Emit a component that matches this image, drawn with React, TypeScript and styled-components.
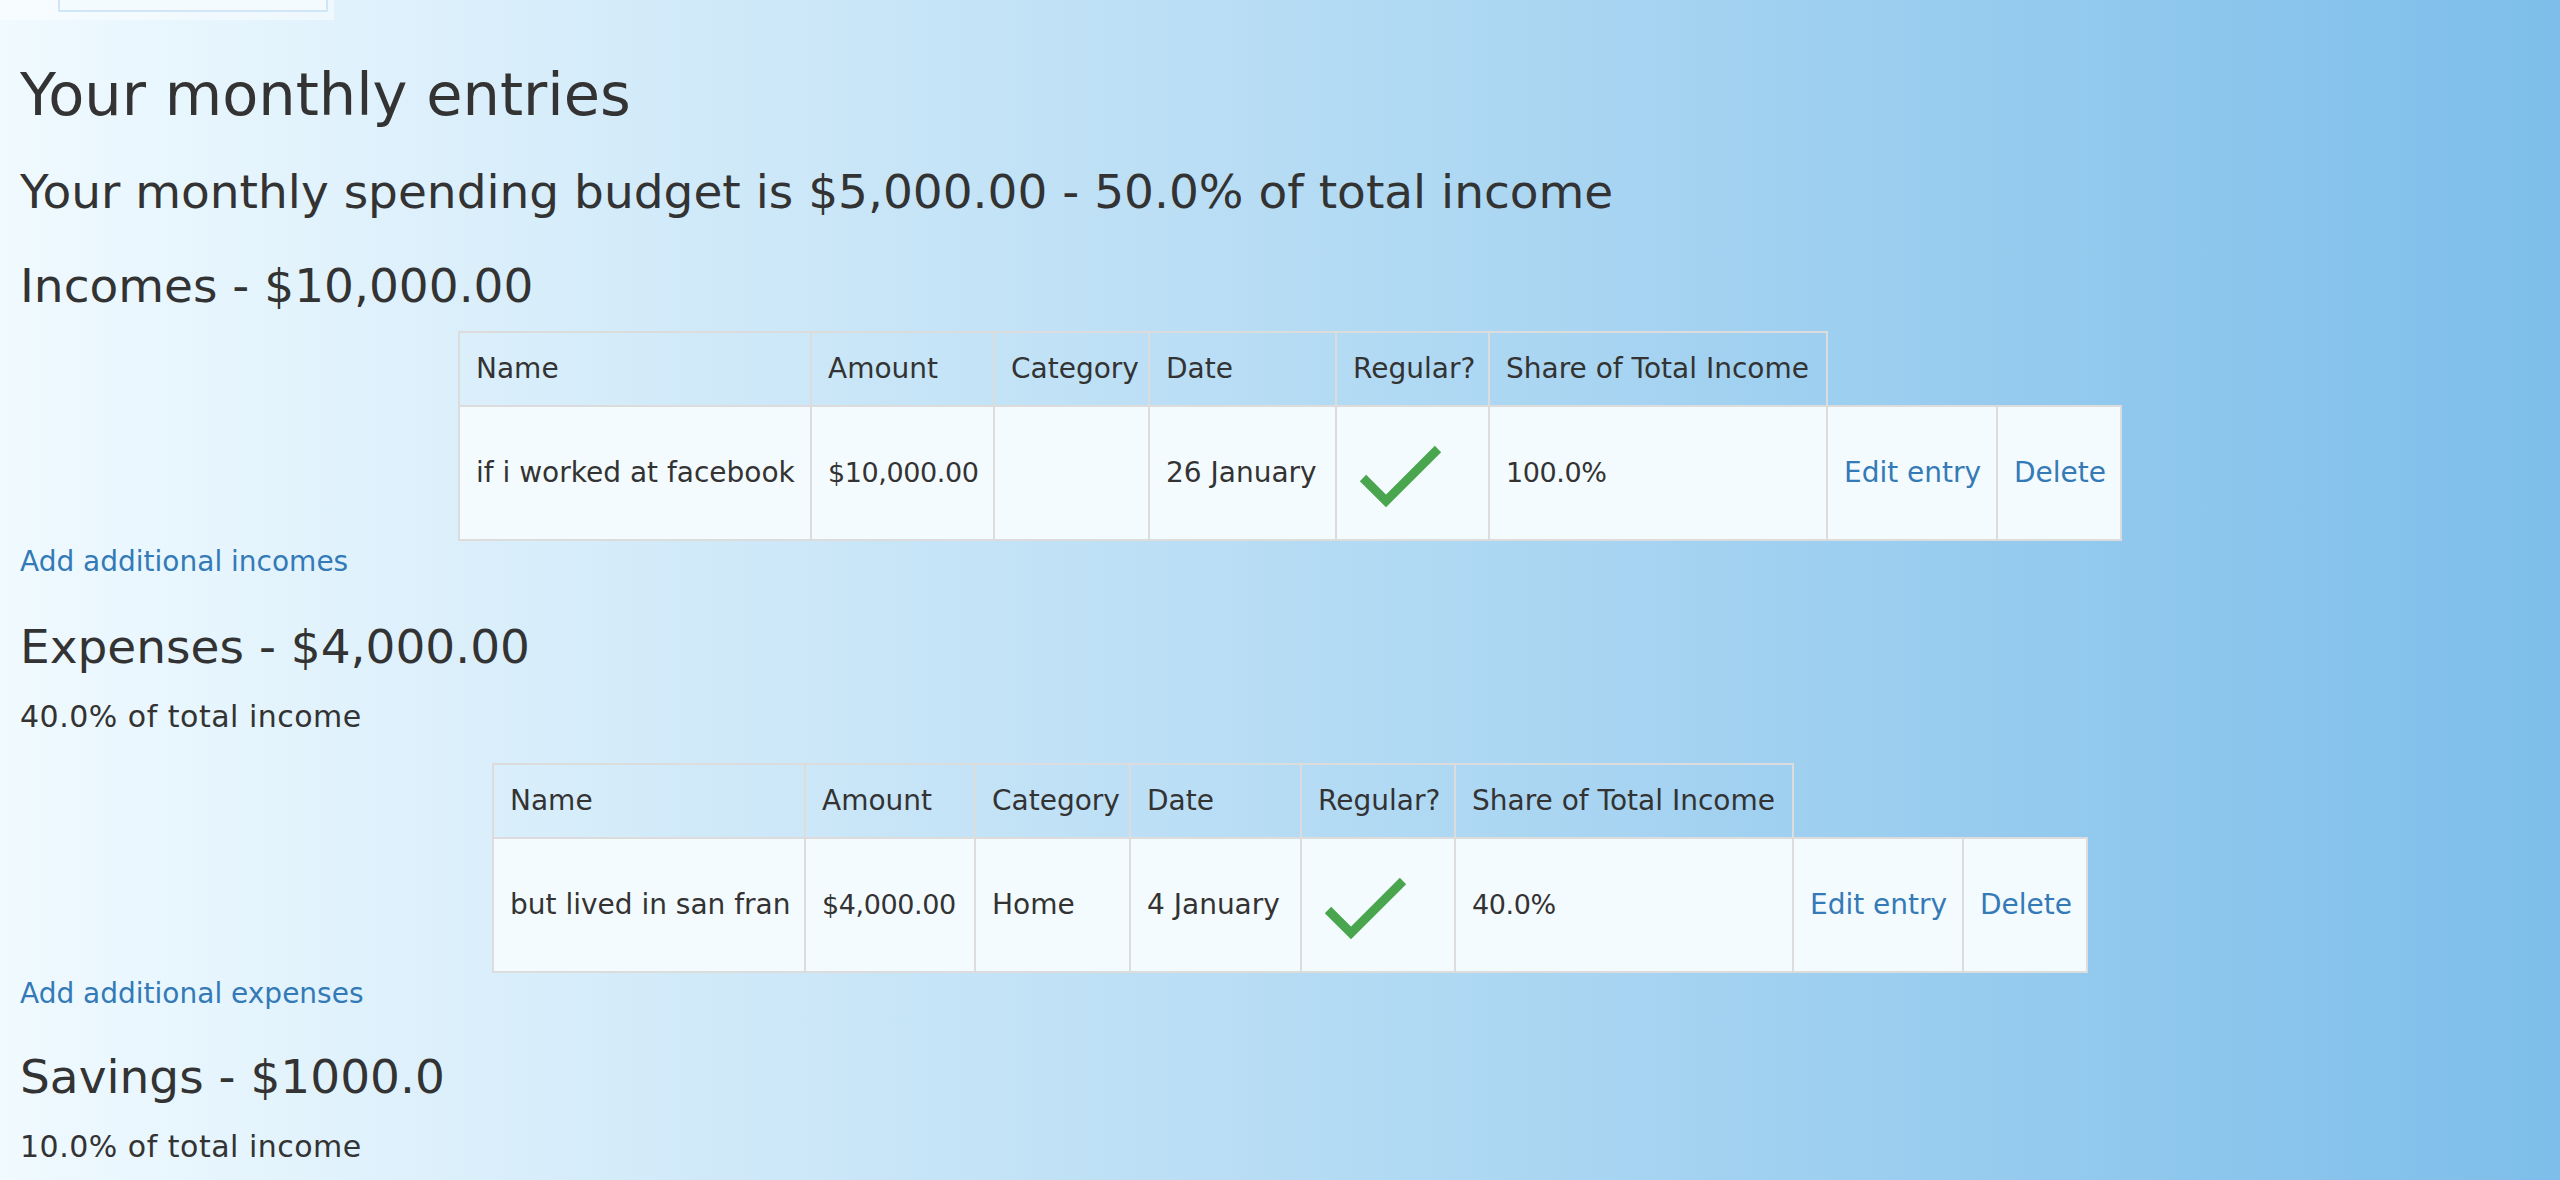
import React from "react";
import styled, { createGlobalStyle } from "styled-components";

const GlobalStyle = createGlobalStyle`
  html, body {
    margin: 0;
    padding: 0;
  }
  body {
    font-family: "DejaVu Sans", "Liberation Sans", sans-serif;
    color: #333;
  }
`;

const Page = styled.div`
  min-height: 100vh;
  width: 100%;
  background: linear-gradient(to right, #f0faff 0%, #b6dcf4 50%, #7dbeea 100%);
  overflow: hidden;
`;

const FormRemnant = styled.div`
  width: 334px;
  height: 20px;
  padding-left: 58px;
  box-sizing: border-box;
  background: rgba(255, 255, 255, 0.45);
`;

const InputRemnant = styled.div`
  width: 270px;
  height: 12px;
  box-sizing: border-box;
  border: 2px solid #cfe6f8;
  border-top: none;
  border-radius: 0 0 2px 2px;
  background: #f4fbfe;
`;

const Content = styled.div`
  padding-left: 20px;
`;

const Title = styled.h1`
  margin: 43px 0 0;
  font-size: 59px;
  line-height: 64px;
  font-weight: normal;
  white-space: nowrap;
`;

const Heading = styled.h3<{ $mt: number }>`
  margin: ${(p) => p.$mt}px 0 0;
  font-size: 47px;
  line-height: 52px;
  font-weight: normal;
  white-space: nowrap;
`;

const Note = styled.p<{ $mt: number }>`
  margin: ${(p) => p.$mt}px 0 0;
  font-size: 30px;
  letter-spacing: 0.5px;
  line-height: 40px;
`;

const AddLink = styled.a`
  display: block;
  margin-top: 1px;
  font-size: 28px;
  line-height: 40px;
  color: #337ab7;
  text-decoration: none;
  width: max-content;
`;

const Table = styled.table<{ $mt: number; $w: number }>`
  border-collapse: collapse;
  table-layout: fixed;
  width: ${(p) => p.$w}px;
  margin: ${(p) => p.$mt}px auto 0;
`;

const HeadCell = styled.th`
  border: 2px solid #dcdcdc;
  padding: 16px;
  text-align: left;
  font-weight: normal;
  font-size: 28px;
  line-height: 40px;
  white-space: nowrap;
  vertical-align: middle;
  color: #333;
`;

const Cell = styled.td<{ $numeric?: boolean }>`
  border: 2px solid #dcdcdc;
  padding: 16px;
  text-align: left;
  font-size: ${(p) => (p.$numeric ? "27px" : "28px")};
  letter-spacing: ${(p) => (p.$numeric ? "-0.4px" : "normal")};
  line-height: 40px;
  white-space: nowrap;
  vertical-align: middle;
  background: #f3fbfe;
  color: #333;
`;

const CellLink = styled.a`
  color: #337ab7;
  text-decoration: none;
`;

const Check = styled.svg`
  display: block;
  width: 100px;
  height: 100px;
`;

const CheckIcon = () => (
  <Check viewBox="0 0 100 100">
    <polyline
      points="10,55 33,78 85,26"
      fill="none"
      stroke="#49a64e"
      strokeWidth="9"
      strokeLinecap="butt"
      strokeLinejoin="miter"
    />
  </Check>
);

type Entry = {
  name: string;
  amount: string;
  category: string;
  date: string;
  share: string;
};

const headers = ["Name", "Amount", "Category", "Date", "Regular?", "Share of Total Income"];

const EntryTable = ({ entry, cols, mt }: { entry: Entry; cols: number[]; mt: number }) => {
  const total = cols.reduce((a, b) => a + b, 0);
  return (
    <Table $mt={mt} $w={total}>
      <colgroup>
        {cols.map((w, i) => (
          <col key={i} style={{ width: w }} />
        ))}
      </colgroup>
      <thead>
        <tr>
          {headers.map((h) => (
            <HeadCell key={h}>{h}</HeadCell>
          ))}
        </tr>
      </thead>
      <tbody>
        <tr>
          <Cell>{entry.name}</Cell>
          <Cell $numeric>{entry.amount}</Cell>
          <Cell>{entry.category}</Cell>
          <Cell>{entry.date}</Cell>
          <Cell>
            <CheckIcon />
          </Cell>
          <Cell $numeric>{entry.share}</Cell>
          <Cell>
            <CellLink href="#">Edit entry</CellLink>
          </Cell>
          <Cell>
            <CellLink href="#">Delete</CellLink>
          </Cell>
        </tr>
      </tbody>
    </Table>
  );
};

export default function App() {
  return (
    <Page>
      <GlobalStyle />
      <FormRemnant>
        <InputRemnant />
      </FormRemnant>
      <Content>
        <Title>Your monthly entries</Title>
        <Heading $mt={39}>Your monthly spending budget is $5,000.00 - 50.0% of total income</Heading>
        <Heading $mt={42}>Incomes - $10,000.00</Heading>
        <EntryTable
          mt={19}
          cols={[352, 183, 155, 187, 153, 338, 170, 124]}
          entry={{
            name: "if i worked at facebook",
            amount: "$10,000.00",
            category: "",
            date: "26 January",
            share: "100.0%",
          }}
        />
        <AddLink href="#">Add additional incomes</AddLink>
        <Heading $mt={39}>Expenses - $4,000.00</Heading>
        <Note $mt={24}>40.0% of total income</Note>
        <EntryTable
          mt={26}
          cols={[312, 170, 155, 171, 154, 338, 170, 124]}
          entry={{
            name: "but lived in san fran",
            amount: "$4,000.00",
            category: "Home",
            date: "4 January",
            share: "40.0%",
          }}
        />
        <AddLink href="#">Add additional expenses</AddLink>
        <Heading $mt={37}>Savings - $1000.0</Heading>
        <Note $mt={24}>10.0% of total income</Note>
      </Content>
    </Page>
  );
}
